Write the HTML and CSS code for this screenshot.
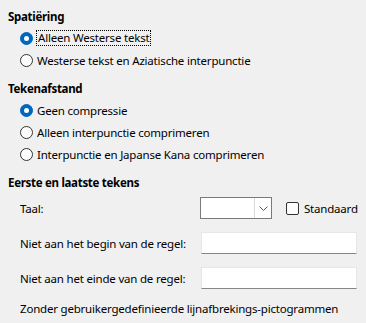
FILE: index.html
```html
<!DOCTYPE html>
<html lang="nl">
<head>
    <meta charset="UTF-8">
    <meta name="viewport" content="width=device-width, initial-scale=1.0">
    <title>Aziatische typografie</title>
    <link rel="stylesheet" href="styles.css">
</head>
<body>

    <!-- Spatiëring -->
    <div class="heading first">Spatiëring</div>
    <div class="options">
        <div class="option"><span class="radio checked"></span><span class="focus">Alleen Westerse tekst</span></div>
        <div class="option"><span class="radio"></span><span>Westerse tekst en Aziatische interpunctie</span></div>
    </div>

    <!-- Tekenafstand -->
    <div class="heading">Tekenafstand</div>
    <div class="options">
        <div class="option"><span class="radio checked"></span><span>Geen compressie</span></div>
        <div class="option"><span class="radio"></span><span>Alleen interpunctie comprimeren</span></div>
        <div class="option"><span class="radio"></span><span>Interpunctie en Japanse Kana comprimeren</span></div>
    </div>

    <!-- Eerste en laatste tekens -->
    <div class="heading">Eerste en laatste tekens</div>
    <div class="form">
        <div class="row lang">
            <label>Taal:</label>
            <div class="controls">
                <div class="combo">
                    <span class="combo-btn">
                        <svg width="9" height="5" viewBox="0 0 9 5"><path d="M0.5 0.5 L4.5 4.5 L8.5 0.5" fill="none" stroke="#555" stroke-width="1"/></svg>
                    </span>
                </div>
                <div class="check"><span class="box"></span><span>Standaard</span></div>
            </div>
        </div>
        <div class="row">
            <label>Niet aan het begin van de regel:</label>
            <div class="field"></div>
        </div>
        <div class="row">
            <label>Niet aan het einde van de regel:</label>
            <div class="field"></div>
        </div>
        <div class="note">Zonder gebruikergedefinieerde lijnafbrekings-pictogrammen</div>
    </div>

</body>
</html>
```

FILE: styles.css
```css
body {
    margin: 0;
    padding: 0 8px;
    background: #f0f0f0;
    color: #000;
    font-family: "Noto Sans", sans-serif;
    font-size: 11.5px;
    letter-spacing: -0.2px;
    white-space: nowrap;
}

.heading {
    font-weight: bold;
    letter-spacing: -0.3px;
    height: 20px;
    line-height: 20px;
    margin-top: 8px;
}

.heading.first {
    margin-top: 7px;
}

.options {
    padding-left: 12px;
}

.option {
    display: flex;
    align-items: center;
    height: 22px;
}

.radio {
    width: 11px;
    height: 11px;
    border: 1px solid #333;
    border-radius: 50%;
    background: #fcfcfc;
    margin-right: 4px;
    position: relative;
    flex-shrink: 0;
}

.radio.checked {
    background: #0067c0;
    border-color: #0067c0;
}

.radio.checked::after {
    content: "";
    position: absolute;
    left: 3px;
    top: 3px;
    width: 5px;
    height: 5px;
    border-radius: 50%;
    background: #fff;
}

.focus {
    outline: 1px dotted #000;
    padding: 0 1px;
    line-height: 14px;
}

.form {
    padding-left: 12px;
}

.row {
    display: grid;
    grid-template-columns: 180px 1fr;
    align-items: center;
    margin-top: 13px;
}

.row.lang {
    margin-top: 4px;
}

.controls {
    display: flex;
    align-items: center;
}

.combo {
    width: 70px;
    height: 20px;
    border: 1px solid #7a7a7a;
    background: #fff;
    display: flex;
    justify-content: flex-end;
}

.combo-btn {
    width: 16px;
    border-left: 1px solid #d9d9d9;
    display: flex;
    align-items: center;
    justify-content: center;
}

.check {
    display: flex;
    align-items: center;
    margin-left: 14px;
}

.box {
    width: 11px;
    height: 11px;
    border: 1px solid #333;
    border-radius: 2px;
    background: #fcfcfc;
    margin-right: 5px;
}

.field {
    width: 154px;
    height: 20px;
    margin-left: 1px;
    background: #fff;
    border: 1px solid #e6e6e6;
    border-bottom-color: #868686;
}

.note {
    margin-top: 10px;
    height: 20px;
    line-height: 20px;
}
```
